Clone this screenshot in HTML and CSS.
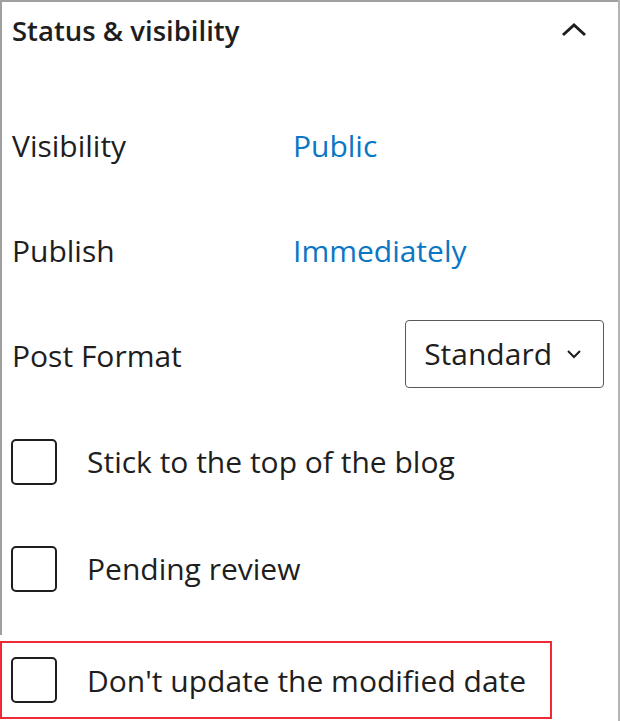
FILE: index.html
```html
<!DOCTYPE html>
<html lang="en">
<head>
  <meta charset="UTF-8" />
  <title>Status &amp; visibility</title>
  <link rel="stylesheet" href="styles.css">
</head>
<body>

  <div class="panel">
    <div class="panel-header">
      <h2>Status &amp; visibility</h2>
      <svg class="chevron-up" width="28" height="16" viewBox="0 0 28 16">
        <path d="M3 13 L14 3 L25 13" fill="none" stroke="#1e1e1e" stroke-width="3"/>
      </svg>
    </div>

    <div class="rows">
      <div class="row">
        <span class="label">Visibility</span>
        <a class="value" href="#">Public</a>
      </div>

      <div class="row">
        <span class="label">Publish</span>
        <a class="value" href="#">Immediately</a>
      </div>

      <div class="row row-format">
        <span class="label">Post Format</span>
        <div class="select">
          Standard
          <svg width="16" height="10" viewBox="0 0 16 10">
            <path d="M2 2 L8 8 L14 2" fill="none" stroke="#1e1e1e" stroke-width="2"/>
          </svg>
        </div>
      </div>

      <label class="check">
        <span class="box"></span>
        Stick to the top of the blog
      </label>

      <label class="check">
        <span class="box"></span>
        Pending review
      </label>
    </div>
  </div>

  <label class="check highlighted">
    <span class="box"></span>
    Don't update the modified date
  </label>

</body>
</html>
```

FILE: styles.css
```css
body {
  margin: 0;
  font-family: 'Open Sans', sans-serif;
  color: #1e1e1e;
  background-color: #ffffff;
  width: 620px;
  height: 721px;
  overflow: hidden;
  border-right: 2px solid #b4b4b4;
  box-sizing: border-box;
}

.panel {
  border-top: 2px solid #a0a0a0;
  border-left: 2px solid #a0a0a0;
  height: 635px;
  box-sizing: border-box;
}

.panel-header {
  display: flex;
  align-items: center;
  justify-content: space-between;
  height: 56px;
  padding: 0 30px 0 10px;
}

.panel-header h2 {
  margin: 0;
  font-size: 27.5px;
  font-weight: 600;
}

.rows {
  margin-top: 35px;
}

.row {
  display: flex;
  align-items: center;
  height: 105px;
  padding-left: 10px;
  font-size: 30px;
}

.label {
  width: 281px;
}

.value {
  color: #0a76c4;
  text-decoration: none;
}

.row-format {
  justify-content: space-between;
  padding-right: 14px;
}

.select {
  display: flex;
  align-items: center;
  gap: 14px;
  height: 68px;
  margin-top: -4px;
  padding: 0 21px 0 18px;
  border: 1.5px solid #5a5a5a;
  border-radius: 4px;
  box-sizing: border-box;
}

.check {
  display: flex;
  align-items: center;
  gap: 30px;
  height: 107px;
  padding-left: 9px;
  font-size: 30px;
  white-space: nowrap;
}

.box {
  flex: none;
  width: 46px;
  height: 46px;
  border: 2px solid #1e1e1e;
  border-radius: 5px;
  box-sizing: border-box;
}

.highlighted {
  width: 552px;
  height: 78px;
  margin-top: 6px;
  padding-left: 9px;
  border: 2px solid #ee2a36;
  box-sizing: border-box;
}
```
